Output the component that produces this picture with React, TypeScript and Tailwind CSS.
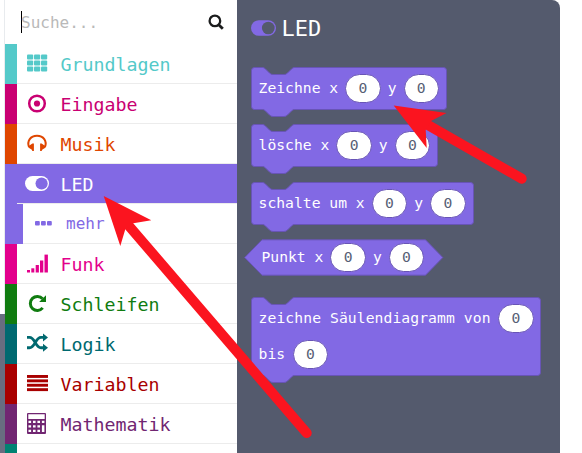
import type { ReactNode } from 'react';

const MONO = "font-['DejaVu_Sans_Mono',monospace]";

function Toggle({ color, knob, className }: { color: string; knob: string; className: string }) {
  return (
    <svg viewBox="0 0 24 15" className={className}>
      <rect width="24" height="15" rx="7.5" fill={color} />
      <circle cx="16.6" cy="7.5" r="6.1" fill={knob} />
    </svg>
  );
}

const icons: Record<string, ReactNode> = {
  grid: [0, 1, 2].flatMap((r) =>
    [0, 1, 2].map((c) => (
      <rect key={`${r}-${c}`} x={2 + c * 7} y={3.5 + r * 6} width="6.2" height="5" rx="1" />
    )),
  ),
  target: (
    <>
      <circle cx="12" cy="12.5" r="7.8" fill="none" stroke="currentColor" strokeWidth="2.5" />
      <circle cx="12" cy="12.5" r="3.1" />
    </>
  ),
  headphones: (
    <>
      <path d="M4 16C1.800 10 5.500 4.800 12 4.800S22.200 10 20 16" fill="none" stroke="currentColor" strokeWidth="2" />
      <path d="M8.900 12.500V20H7.400L6.600 18.500 3.600 16.800 3.400 15.300 7.400 12.500ZM15.100 12.500V20h1.500l.8-1.500 3-1.700.2-1.500-4-2.800Z" />
    </>
  ),
  toggle: (
    <>
      <rect y="5" width="24" height="15" rx="7.5" />
      <circle cx="16.6" cy="12.5" r="6.1" className="fill-[#8269e4]" />
    </>
  ),
  signal: (
    <>
      <rect x="2" y="19" width="3" height="2.5" />
      <rect x="6.3" y="17.3" width="3" height="4.2" />
      <rect x="10.7" y="14" width="3.2" height="7.5" />
      <rect x="15" y="9.5" width="3.3" height="12" />
      <rect x="19.5" y="3.6" width="3.4" height="17.9" />
    </>
  ),
  repeat: (
    <>
      <path d="M17.700 16.900A7 7 0 1 1 17.600 7.800" fill="none" stroke="currentColor" strokeWidth="3" />
      <path d="M21 4.200v6.900h-6.900Z" />
    </>
  ),
  shuffle: (
    <>
      <path
        d="M2 6.400h2.500c5.500 0 6 10.400 11.500 10.400h2.500M2 16.800h2.500c5.500 0 6-10.400 11.500-10.400h2.500"
        fill="none"
        stroke="currentColor"
        strokeWidth="2.9"
      />
      <path d="m18 2.400 5 4-5 4ZM18 12.800l5 4-5 4Z" />
    </>
  ),
  lines: [4, 8.4, 12.8, 17.2].map((y) => <rect key={y} x="2" y={y} width="21" height="2.9" />),
  calculator: (
    <path
      fillRule="evenodd"
      d="M3 2h17a1 1 0 0 1 1 1v19a1 1 0 0 1-1 1H3a1 1 0 0 1-1-1V3a1 1 0 0 1 1-1ZM3.300 3.300h16.400v4.700H3.300ZM3.500 9.800h2.600v2.200h-2.600ZM8 9.800h2.600v2.200H8ZM12.400 9.800h2.600v2.200h-2.600ZM16.900 9.800h2.500v2.200h-2.500ZM3.500 14.200h2.600v2.200h-2.600ZM8 14.200h2.600v2.200H8ZM12.400 14.200h2.600v2.200h-2.600ZM3.500 18.800h2.600v2.200h-2.600ZM8 18.800h2.600v2.200H8ZM12.400 18.800h2.600v2.200h-2.600ZM16.900 14.200h2.500v6.800h-2.500Z"
    />
  ),
};

const categories = [
  { label: 'Grundlagen', icon: 'grid', strip: 'bg-[#54c9c9]', text: 'text-[#54c9c9]' },
  { label: 'Eingabe', icon: 'target', strip: 'bg-[#c90072]', text: 'text-[#c90072]' },
  { label: 'Musik', icon: 'headphones', strip: 'bg-[#df4600]', text: 'text-[#df4600]' },
  { label: 'LED', icon: 'toggle', strip: 'bg-[#8269e4]', text: 'text-white', selected: true },
  { label: 'Funk', icon: 'signal', strip: 'bg-[#e3008c]', text: 'text-[#e3008c]' },
  { label: 'Schleifen', icon: 'repeat', strip: 'bg-[#107c10]', text: 'text-[#107c10]' },
  { label: 'Logik', icon: 'shuffle', strip: 'bg-[#006970]', text: 'text-[#006970]' },
  { label: 'Variablen', icon: 'lines', strip: 'bg-[#a80000]', text: 'text-[#a80000]' },
  { label: 'Mathematik', icon: 'calculator', strip: 'bg-[#712672]', text: 'text-[#712672]' },
];

function Category({ item }: { item: (typeof categories)[number] }) {
  return (
    <>
      <div className="flex h-10 shrink-0">
        <div className={`w-3 ${item.strip}`} />
        <div
          className={`flex flex-1 border-b border-[#ececec] pl-2 ${item.text} ${item.selected ? 'bg-[#8269e4]' : ''}`}
        >
          <svg viewBox="0 0 24 24" fill="currentColor" className="mt-[7px] size-6 shrink-0">
            {icons[item.icon]}
          </svg>
          <span className="ml-[11.5px] text-[18.3px] leading-[41px]">{item.label}</span>
        </div>
      </div>
      {item.selected && (
        <div className="flex h-10 shrink-0">
          <div className="w-[18px] bg-[#8269e4]" />
          <div className="flex flex-1 items-center border-b border-[#ececec] pl-3 text-[#8269e4]">
            <svg viewBox="0 0 17 5" fill="currentColor" className="h-[5px] w-[17px]">
              <rect width="4.8" height="4.5" rx="1" />
              <rect x="6" width="4.8" height="4.5" rx="1" />
              <rect x="12" width="4.8" height="4.5" rx="1" />
            </svg>
            <span className="ml-[14px] pt-px text-[16px]">mehr</span>
          </div>
        </div>
      )}
    </>
  );
}

function Zero() {
  return (
    <span className="flex h-[29px] w-[35.5px] items-center justify-center rounded-full border border-[#6854b6] bg-white text-[#575e75]">
      0
    </span>
  );
}

function Shape({ width, height }: { width: number; height: number }) {
  const r = width - 0.5;
  const b = height - 0.5;
  return (
    <svg width={width} height={height + 8} className="absolute left-0 top-0">
      <path
        d={`M3.500 .5H11.500Q13 .5 14.200 1.700L18.500 6Q20 7.500 22 7.500H33Q35 7.500 36.500 6L40.800 1.700Q42 .5 43.500 .5H${r - 3}Q${r} .5 ${r} 3.500V${b - 3}Q${r} ${b} ${r - 3} ${b}H43.500Q42 ${b} 40.800 ${b + 1.2}L36.500 ${b + 5.5}Q35 ${b + 7} 33 ${b + 7}H22Q20 ${b + 7} 18.500 ${b + 5.5}L14.200 ${b + 1.2}Q13 ${b} 11.500 ${b}H3.500Q.5 ${b} .5 ${b - 3}V3.500Q.5 .5 3.500 .5Z`}
        fill="#8269e4"
        stroke="#6854b6"
      />
    </svg>
  );
}

function Row({ text }: { text: string }) {
  return (
    <div className="relative flex items-center gap-[7px]">
      <span>{text}</span>
      <Zero />
      <span>y</span>
      <Zero />
    </div>
  );
}

function Block({ text, width, className }: { text: string; width: number; className: string }) {
  return (
    <div className={`relative flex h-[43px] items-center pl-[7.6px] ${className}`}>
      <Shape width={width} height={43} />
      <Row text={text} />
    </div>
  );
}

export default function App() {
  return (
    <div className={`relative flex h-[453px] w-[582px] overflow-hidden bg-white ${MONO}`}>
      <div className="flex w-[5px] flex-col">
        <div className="h-[314px] border-r border-[#e8ebee]" />
        <div className="flex-1 bg-[#686d80]" />
      </div>

      <aside className="flex w-[232px] flex-col overflow-hidden bg-white">
        <div className="flex h-11 shrink-0 items-center pl-4 pr-[13px]">
          <span className="h-[22px] w-px bg-black" />
          <span className="-ml-px pt-px text-[16px] text-[#b9b9b9]">Suche...</span>
          <svg viewBox="0 0 16 16" className="ml-auto size-4" fill="none" stroke="#1b1c1d">
            <circle cx="6.900" cy="6.900" r="5.300" strokeWidth="2.300" />
            <path d="m10.700 10.700 4.100 4.100" strokeWidth="2.800" />
          </svg>
        </div>
        {categories.map((item) => (
          <Category key={item.label} item={item} />
        ))}
        <div className="h-10 w-3 shrink-0 bg-[#008272]" />
      </aside>

      <main className="flex w-[323px] flex-col rounded-tr-lg bg-[#545a6d] pl-[14px] text-[14.7px] text-white">
        <header className="flex h-[56px] items-center">
          <Toggle color="#8269e4" knob="#545a6d" className="h-[16px] w-[25px]" />
          <span className="ml-[5.5px] pt-px text-[22px]">LED</span>
        </header>
        <Block text="Zeichne x" width={196} className="mt-[11px]" />
        <Block text="lösche x" width={187} className="mt-[14px]" />
        <Block text="schalte um x" width={223} className="mt-[15px]" />
        <div className="relative -ml-[7px] mt-[14px] flex h-[37px] items-center pl-[17.5px]">
          <svg width="200" height="37" className="absolute left-0 top-0">
            <path d="M.7 18.500 18 .8H181.500L198.800 18.500 181.500 36.200H18Z" fill="#8269e4" stroke="#6854b6" />
          </svg>
          <Row text="Punkt x" />
        </div>
        <div className="relative mt-[21px] flex h-[79px] flex-col gap-[7px] pl-[7.6px] pt-[7px]">
          <Shape width={290} height={79} />
          <div className="relative flex items-center gap-[7.5px] whitespace-nowrap">
            <span className="tracking-[0.08px]">zeichne Säulendiagramm von</span>
            <Zero />
          </div>
          <div className="relative flex items-center gap-[7.5px]">
            <span>bis</span>
            <Zero />
          </div>
        </div>
      </main>

      <svg viewBox="0 0 582 453" className="pointer-events-none absolute inset-0" fill="#fb141f" stroke="#fb141f">
        <path d="M129 226 306.700 433" strokeWidth="10" strokeLinecap="round" />
        <path d="M103.700 196 151.300 220.300 133.300 223.300 125.300 229.300 120.300 246Z" stroke="none" />
        <path d="M429 125.600 521.700 178.700" strokeWidth="10" strokeLinecap="round" />
        <path d="M393.700 105.500 446.500 113 431 121 425.700 130 426.700 148Z" stroke="none" />
      </svg>
    </div>
  );
}
